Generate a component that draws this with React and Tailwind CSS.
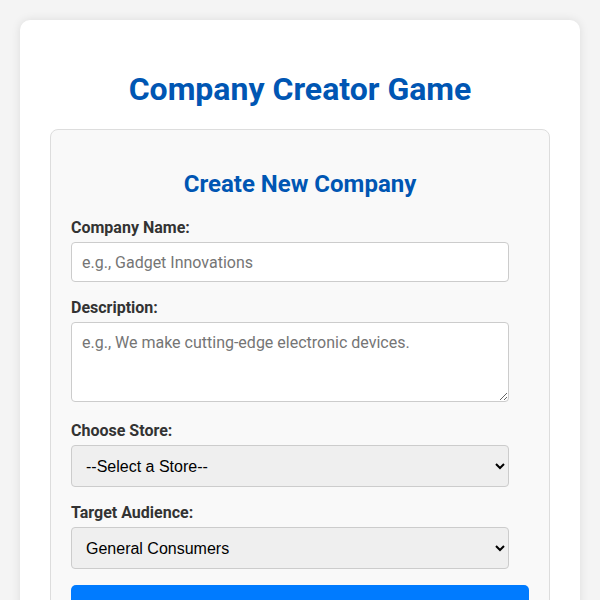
import React, { useState } from 'react';

function App() {
  const [name, setName] = useState('');
  const [description, setDescription] = useState('');
  const [store, setStore] = useState('');
  const [audience, setAudience] = useState('general');

  return (
    <div className="min-h-screen bg-[#f4f4f4] p-5 font-['Roboto',sans-serif] text-[#333]">
      <div className="bg-white rounded-[10px] shadow-[0_0_10px_rgba(0,0,0,0.1)] px-[30px] pt-[30px] pb-[30px]">
        <h1 className="text-center text-[32px] font-bold text-[#0056b3] my-[21px] leading-[37px]">
          Company Creator Game
        </h1>

        <div className="bg-[#f9f9f9] border border-[#ddd] rounded-[8px] p-5">
          <h2 className="text-center text-2xl font-bold text-[#0056b3] mt-5 mb-5 leading-7">
            Create New Company
          </h2>

          <label className="block font-bold mb-[5px] leading-[19px]">Company Name:</label>
          <input
            type="text"
            value={name}
            onChange={(e) => setName(e.target.value)}
            placeholder="e.g., Gadget Innovations"
            className="block w-[438px] h-10 px-[10px] mb-[16px] bg-white border border-[#ccc] rounded-[4px] text-base placeholder:text-[#757575] outline-none"
          />

          <label className="block font-bold mb-[5px] leading-[19px]">Description:</label>
          <textarea
            value={description}
            onChange={(e) => setDescription(e.target.value)}
            placeholder="e.g., We make cutting-edge electronic devices."
            rows={3}
            className="block w-[438px] h-[80px] p-[10px] pt-[10px] mb-[19px] bg-white border border-[#ccc] rounded-[4px] text-base leading-[19px] placeholder:text-[#757575] outline-none resize-y"
          />

          <label className="block font-bold mb-[5px] leading-[19px]">Choose Store:</label>
          <select
            value={store}
            onChange={(e) => setStore(e.target.value)}
            className="block w-[438px] h-[42px] pl-[10px] pr-[10px] mb-[16px] bg-[#efefef] border border-[#ccc] rounded-[4px] text-base text-black font-['Liberation_Sans',sans-serif]"
          >
            <option value="">--Select a Store--</option>
            <option value="electronics">Electronics Store</option>
            <option value="fashion">Fashion Boutique</option>
            <option value="grocery">Grocery Market</option>
          </select>

          <label className="block font-bold mb-[5px] leading-[19px]">Target Audience:</label>
          <select
            value={audience}
            onChange={(e) => setAudience(e.target.value)}
            className="block w-[438px] h-[42px] pl-[10px] pr-[10px] mb-[16px] bg-[#efefef] border border-[#ccc] rounded-[4px] text-base text-black font-['Liberation_Sans',sans-serif]"
          >
            <option value="general">General Consumers</option>
            <option value="business">Businesses</option>
            <option value="students">Students</option>
          </select>

          <button className="block w-full h-[44px] bg-[#007bff] text-white font-bold text-base rounded-[5px]">
            Create Company
          </button>
        </div>
      </div>
    </div>
  );
}

export default App;
